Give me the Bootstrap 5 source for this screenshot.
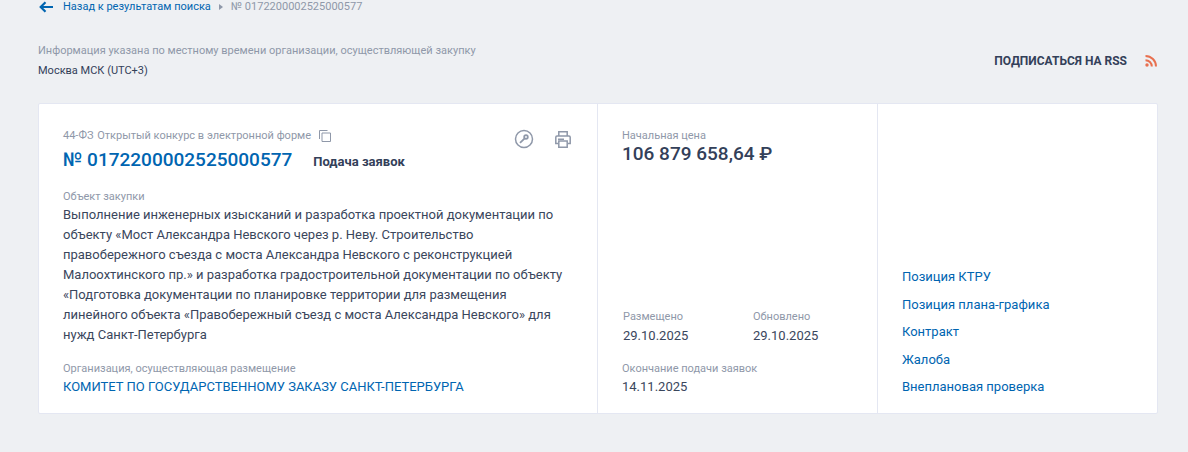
<!DOCTYPE html>
<html lang="ru">
<head>
    <meta charset="UTF-8">
    <title>Закупка № 0172200002525000577</title>
    <meta name="viewport" content="width=device-width, initial-scale=1">
    <link href="https://cdn.jsdelivr.net/npm/bootstrap@5.3.3/dist/css/bootstrap.min.css" rel="stylesheet">
    <style>
        html, body { height: 452px; overflow: hidden; }
        body { background: #eef0f3; font-family: Roboto, "Liberation Sans", sans-serif; color: #3a465c; font-size: 13px; line-height: 20px; }
        a { color: #0065b1; text-decoration: none; }
        .page-wrap { width: 1120px; margin-left: 38px; }
        .crumbs { height: 14px; font-size: 11px; line-height: 14px; color: #8f98a9; }
        .crumbs .back-arrow { margin: 0 10px 0 1px; }
        .crumbs .sep { width: 0; height: 0; border-left: 4px solid #8f98a9; border-top: 3px solid transparent; border-bottom: 3px solid transparent; margin: 0 8px; }
        .tz-row { margin-top: 30px; height: 59px; }
        .tz-note { font-size: 11px; line-height: 14px; color: #8f98a9; }
        .tz-city { font-size: 11px; line-height: 14px; color: #334059; margin-top: 6px; }
        .rss-link { font-size: 12px; font-weight: 700; color: #334059; gap: 18px; margin-right: 1px; margin-top: -26px; }
        .rss-link svg { margin-top: 1px; }
        .info-card { height: 311px; background: #fff; border: 1px solid #e4e7f2; border-radius: 2px; }
        .main-col { width: 559px; padding: 25px 24px 0; border-right: 1px solid #e4e7f2; flex: none; }
        .price-col { width: 280px; padding: 25px 24px 0; border-right: 1px solid #e4e7f2; flex: none; }
        .links-col { flex: 1; padding: 0 24px 16px 24px; }
        .field-label { font-size: 11px; line-height: 14px; color: #8f98a9; }
        .type-law { margin-right: 1px; }
        .reg-number { font-size: 19px; line-height: 26px; font-weight: 500; color: #0065b1; }
        .reg-status { font-size: 13px; font-weight: 700; color: #334059; margin-left: 21px; margin-top: 3px; }
        .number-row { margin-top: 4px; }
        .subject-label { margin-top: 17px; }
        .subject-text { margin-top: 1px; font-size: 13px; line-height: 20px; }
        .org-label { margin-top: 17px; }
        .org-link { font-size: 13px; line-height: 18px; display: block; margin-top: 2px; }
        .price-value { font-size: 19px; line-height: 21px; font-weight: 500; color: #334059; }
        .date-value { font-size: 13px; line-height: 20px; margin-top: 1px; }
        .side-links { gap: 7.5px; }
        .side-links a { line-height: 20px; }
        .card-tools { position: absolute; top: 25px; right: 26px; gap: 21px; align-items: center; }
        .dates-block { padding-bottom: 16px; }
        .date-pair { padding-left: 1px; }
        .date-pair .date-value { margin-top: 2px; }
        .date-one { width: 130px; }
        .date-end { margin-top: 16px; }
    </style>
</head>
<body>
    <div class="page-wrap">
        <div class="crumbs d-flex align-items-center">
            <svg class="back-arrow" width="14" height="12" viewBox="0 0 14 12" fill="none" stroke="#0065b1" stroke-width="2.200"><path d="M14 6H2M6.500 1.200 1.700 6l4.800 4.800"/></svg>
            <a href="#">Назад к результатам поиска</a>
            <span class="sep"></span>
            <span>№ 0172200002525000577</span>
        </div>

        <div class="tz-row d-flex justify-content-between align-items-center">
            <div class="align-self-start">
                <div class="tz-note">Информация указана по местному времени организации, осуществляющей закупку</div>
                <div class="tz-city">Москва МСК (UTC+3)</div>
            </div>
            <a href="#" class="rss-link d-flex align-items-center">ПОДПИСАТЬСЯ НА RSS
                <svg width="12" height="12" viewBox="0 0 12 12" fill="none" stroke="#e8704f" stroke-width="2"><circle cx="2" cy="10" r="1.700" fill="#e8704f" stroke="none"/><path d="M.5 5.200A6.300 6.300 0 0 1 6.800 11.500M.5 1A10.500 10.500 0 0 1 11 11.500"/></svg>
            </a>
        </div>

        <div class="info-card d-flex">
            <div class="main-col position-relative">
                <div class="field-label d-flex align-items-center">
                    <span><span class="type-law">44-ФЗ</span> Открытый конкурс в электронной форме</span>
                    <svg class="ms-2" width="12" height="12" viewBox="0 0 12 12" fill="none" stroke="#8f98a9"><path d="M.5 9V.5H8.500"/><path d="M3 3h8.500v8.500H3z"/></svg>
                </div>
                <div class="number-row d-flex align-items-center">
                    <a href="#" class="reg-number">№ 0172200002525000577</a>
                    <span class="reg-status">Подача заявок</span>
                </div>
                <div class="field-label subject-label">Объект закупки</div>
                <div class="subject-text">Выполнение инженерных изысканий и разработка проектной документации по объекту «Мост Александра Невского через р. Неву. Строительство правобережного съезда с моста Александра Невского с реконструкцией Малоохтинского пр.» и разработка градостроительной документации по объекту «Подготовка документации по планировке территории для размещения линейного объекта «Правобережный съезд с моста Александра Невского» для нужд Санкт-Петербурга</div>
                <div class="field-label org-label">Организация, осуществляющая размещение</div>
                <a href="#" class="org-link">КОМИТЕТ ПО ГОСУДАРСТВЕННОМУ ЗАКАЗУ САНКТ-ПЕТЕРБУРГА</a>
                <div class="card-tools d-flex">
                    <svg width="20" height="20" viewBox="0 0 20 20" fill="none" stroke="#8f98a9" stroke-width="1.500"><circle cx="10" cy="10" r="8.500"/><circle cx="12" cy="8" r="1.800" stroke-width="1.800"/><path d="M10.700 9.300 6 13.800" stroke-width="1.800"/></svg>
                    <svg width="16" height="17" viewBox="0 0 16 17" fill="none" stroke="#8f98a9" stroke-width="1.500"><path d="M3.800 5V.8h8.400V5"/><path d="M3 12.500H.8V6.200q0-1.200 1.200-1.200h12q1.200 0 1.200 1.200v6.300H13"/><path d="M3.800 10h8.400v6.200H3.800zM3 8.200h6"/></svg>
                </div>
            </div>
            <div class="price-col d-flex flex-column">
                <div class="field-label">Начальная цена</div>
                <div class="price-value">106 879 658,64 ₽</div>
                <div class="mt-auto dates-block">
                    <div class="d-flex date-pair">
                        <div class="date-one">
                            <div class="field-label">Размещено</div>
                            <div class="date-value">29.10.2025</div>
                        </div>
                        <div>
                            <div class="field-label">Обновлено</div>
                            <div class="date-value">29.10.2025</div>
                        </div>
                    </div>
                    <div class="date-end">
                        <div class="field-label">Окончание подачи заявок</div>
                        <div class="date-value">14.11.2025</div>
                    </div>
                </div>
            </div>
            <div class="links-col d-flex flex-column justify-content-end">
                <div class="side-links d-flex flex-column">
                    <a href="#">Позиция КТРУ</a>
                    <a href="#">Позиция плана-графика</a>
                    <a href="#">Контракт</a>
                    <a href="#">Жалоба</a>
                    <a href="#">Внеплановая проверка</a>
                </div>
            </div>
        </div>
    </div>
    <script src="https://cdn.jsdelivr.net/npm/bootstrap@5.3.3/dist/js/bootstrap.bundle.min.js"></script>
</body>
</html>
